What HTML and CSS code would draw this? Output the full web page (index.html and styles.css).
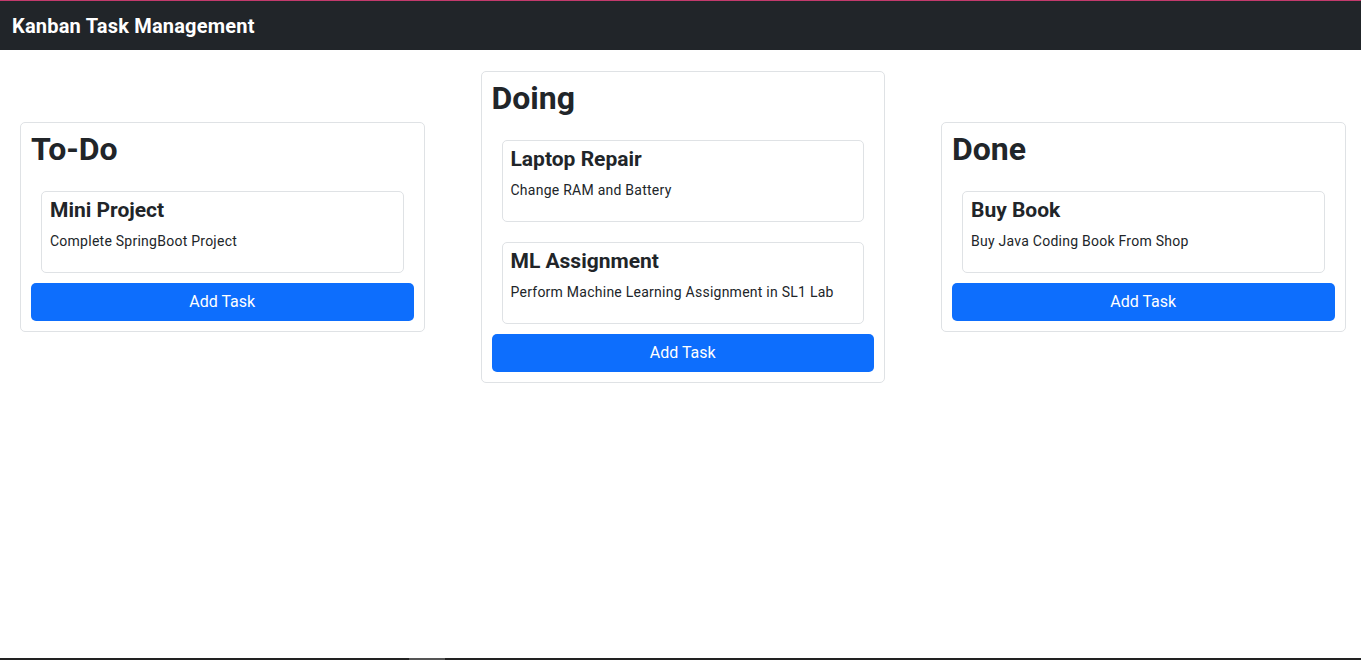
FILE: index.html
```html
<!DOCTYPE html>
<html lang="en">
<head>
<meta charset="utf-8">
<title>Kanban Task Management</title>
<link rel="stylesheet" href="styles.css">
</head>
<body>
<div class="page">
  <nav class="navbar">
    <span class="brand">Kanban Task Management</span>
  </nav>
  <main class="content">
    <div class="board">
      <section class="column">
        <h1 class="column-title">To-Do</h1>
        <div class="tasks">
          <div class="task">
            <h5 class="task-title">Mini Project</h5>
            <p class="task-text">Complete SpringBoot Project</p>
          </div>
        </div>
        <button class="btn-add">Add Task</button>
      </section>
      <section class="column">
        <h1 class="column-title">Doing</h1>
        <div class="tasks">
          <div class="task">
            <h5 class="task-title">Laptop Repair</h5>
            <p class="task-text">Change RAM and Battery</p>
          </div>
          <div class="task">
            <h5 class="task-title">ML Assignment</h5>
            <p class="task-text">Perform Machine Learning Assignment in SL1 Lab</p>
          </div>
        </div>
        <button class="btn-add">Add Task</button>
      </section>
      <section class="column">
        <h1 class="column-title">Done</h1>
        <div class="tasks">
          <div class="task">
            <h5 class="task-title">Buy Book</h5>
            <p class="task-text">Buy Java Coding Book From Shop</p>
          </div>
        </div>
        <button class="btn-add">Add Task</button>
      </section>
    </div>
  </main>
  <div class="bottom-bar"><span class="bottom-thumb"></span></div>
</div>
</body>
</html>
```

FILE: styles.css
```css
* {
  box-sizing: border-box;
}

html, body {
  margin: 0;
  padding: 0;
}

body {
  font-family: Roboto, "Liberation Sans", sans-serif;
  color: #212529;
  background: #ffffff;
  font-size: 16px;
  line-height: 1.5;
}

.page {
  display: flex;
  flex-direction: column;
  min-height: 100vh;
}

.navbar {
  height: 50px;
  background: #212529;
  border-top: 1px solid #c23a6c;
  display: flex;
  align-items: center;
  padding-left: 12px;
}

.brand {
  color: #ffffff;
  font-size: 20px;
  font-weight: 700;
  line-height: 1.2;
  letter-spacing: 0.2px;
}

.content {
  flex: 1;
}

.board {
  display: flex;
  align-items: center;
  gap: 56px;
  padding: 21px 0 0 20px;
}

.column {
  width: 404.5px;
  flex: none;
  border: 1px solid #dfe2e5;
  border-radius: 5px;
  padding: 5px 10px 10px 10px;
  display: flex;
  flex-direction: column;
}

.column-title {
  margin: 0 0 11px 0;
  font-size: 32px;
  font-weight: 700;
  line-height: 42px;
}

.tasks {
  display: flex;
  flex-direction: column;
}

.task {
  margin: 10px;
  border: 1px solid #dfe2e5;
  border-radius: 5px;
  padding: 6px 8px;
  height: 82px;
}

.task-title {
  margin: 0 0 9px 0;
  font-size: 21px;
  font-weight: 700;
  line-height: 24px;
}

.task-text {
  margin: 0;
  font-size: 14px;
  line-height: 21px;
  letter-spacing: 0.25px;
}

.btn-add {
  height: 38px;
  width: 100%;
  border: none;
  border-radius: 5px;
  background: #0d6efd;
  color: #ffffff;
  font-family: Roboto, "Liberation Sans", sans-serif;
  font-size: 16px;
  line-height: 24px;
  cursor: pointer;
}

.bottom-bar {
  height: 2px;
  background: #222222;
  padding-left: 409px;
}

.bottom-thumb {
  display: block;
  width: 36px;
  height: 2px;
  background: #555555;
}
```
